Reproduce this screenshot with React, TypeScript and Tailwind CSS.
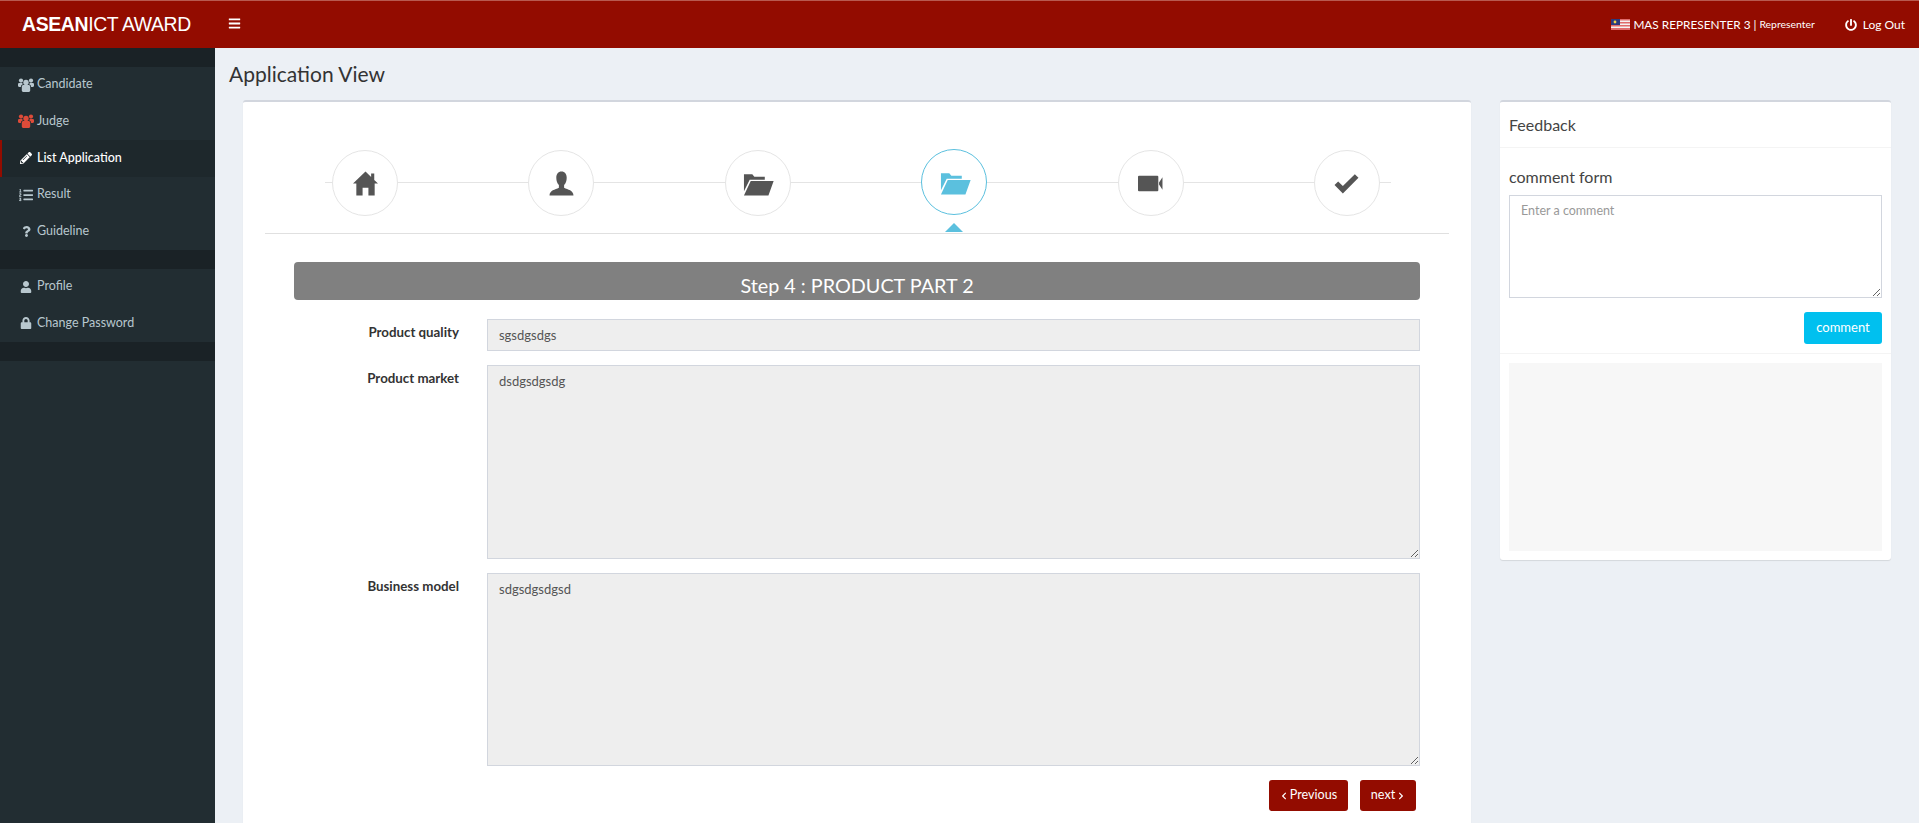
import { FaPencilAlt, FaListOl, FaQuestion, FaUser, FaLock, FaBars, FaPowerOff, FaChevronLeft, FaChevronRight } from "react-icons/fa";
import type { ReactNode } from "react";

function MalaysiaFlag() {
  return (
    <svg width="19" height="11" viewBox="0 0 19 11" className="shrink-0">
      <rect width="19" height="11" fill="#f5f0f0" />
      <rect y="0" width="19" height="1.5" fill="#e06a6a" />
      <rect y="3" width="19" height="1.5" fill="#e06a6a" />
      <rect y="6" width="19" height="1.5" fill="#e06a6a" />
      <rect y="9" width="19" height="2" fill="#e06a6a" />
      <rect width="9" height="6" fill="#2b3a7e" />
      <circle cx="4" cy="3" r="1.4" fill="#f2d64b" />
    </svg>
  );
}

// three-person group, the package's FaUsers is too flat for this one
function GroupIcon() {
  return (
    <svg width="16" height="14" viewBox="0 0 16 14" fill="currentColor">
      <circle cx="8" cy="4.400" r="2.700" />
      <path d="M3.800 8.600c0-1 .8-1.600 1.800-1.600h4.800c1 0 1.800.6 1.800 1.600v3.900c0 .8-.6 1.400-1.400 1.400H5.200c-.8 0-1.400-.6-1.400-1.400z" />
      <circle cx="3" cy="2.600" r="2.100" />
      <circle cx="13" cy="2.600" r="2.100" />
      <path d="M0 6.300C0 5.500.6 5 1.400 5h3c-.2.5.1 1 .5 1.300C3.500 6.700 2.900 7.600 2.900 9H1.200C.5 9 0 8.500 0 7.800zM16 6.300C16 5.500 15.400 5 14.600 5h-3c.2.5-.1 1-.5 1.300 1.400.4 2 1.300 2 2.700h1.700c.7 0 1.200-.5 1.200-1.200z" />
    </svg>
  );
}

function SideItem({ icon, label, active, iconClass }: { icon: ReactNode; label: string; active?: boolean; iconClass?: string }) {
  return (
    <div className={`flex h-[36.6px] items-center border-l-[2px] pb-[1px] pl-[16px] ${active ? "border-[#930c00] bg-[#1e282c] text-white" : "border-transparent text-[#b8c7ce]"}`}>
      <span className={`flex w-[16px] justify-center text-[14px] ${iconClass ?? ""}`}>{icon}</span>
      <span className={`ml-[3px] text-[12.500px] ${active ? "font-medium" : ""}`}>{label}</span>
    </div>
  );
}

const folderOpen = "M-1 3h8l2 2.500h10v3H4.500L-1 19.500zM5.500 9.700H27.500L22.500 23.500H-1z";

const stepIcons: ReactNode[] = [
  // home
  <path key="h" d="M12 .5 0 12h3.200v11.500h6V16h5.600v7.500h6V12H24l-3.600-3.400V2.500h-3v3.300z" />,
  // user
  <path key="u" d="M12 .5C8.800.5 7 3.100 7 6.500c0 3 1 5.400 2.500 7V16C6 17.700.5 18.500.5 23.500h23C23.500 18.500 18 17.700 14.500 16v-2.500c1.500-1.600 2.500-4 2.500-7C17 3.100 15.200.5 12 .5z" />,
  <path key="f" d={folderOpen} />,
  <path key="f2" d={folderOpen} />,
  // video
  <path key="v" d="M1 4.500h17.500a1 1 0 0 1 1 1v13a1 1 0 0 1-1 1H1a1 1 0 0 1-1-1v-13a1 1 0 0 1 1-1zM20.200 11 23.500 6v12l-3.300-5z" />,
  // check
  <path key="c" d="M8.500 21.500.5 13.500 4 10l4.500 4.500L20 3l3.500 3.500z" />,
];

function StepCircle({ index, active }: { index: number; active?: boolean }) {
  return (
    <div className={`relative z-10 flex h-[66px] w-[66px] items-center justify-center rounded-full border bg-white ${active ? "-translate-y-px border-[#5bc0de]" : "border-[#e5e5e5]"}`}>
      <svg viewBox="0 0 24 24" className={`h-[25px] w-[25px] overflow-visible ${active ? "fill-[#5bc0de]" : "fill-[#555555]"}`}>
        {stepIcons[index]}
      </svg>
      {active && <span className="absolute -bottom-[18px] left-1/2 h-0 w-0 -translate-x-1/2 border-x-[9px] border-b-[9px] border-x-transparent border-b-[#5bc0de]" />}
    </div>
  );
}

function Field({ label, children }: { label: string; children: ReactNode }) {
  return (
    <div className="flex">
      <label className="w-[165px] pt-[3px] text-right text-[13.300px] font-bold leading-[20px] text-[#333333]">{label}</label>
      <div className="ml-[28px] flex-1">{children}</div>
    </div>
  );
}

function ReadOnlyArea({ value }: { value: string }) {
  return (
    <textarea
      readOnly
      value={value}
      className="block h-[193.500px] w-full resize-y border border-[#d2d6de] bg-[#eeeeee] px-[11px] py-[5px] text-[13px] leading-[20px] text-[#555555]"
    />
  );
}

export default function App() {
  return (
    <div className="flex h-screen flex-col overflow-hidden bg-[#ecf0f5] font-['Lato','Liberation_Sans',sans-serif] text-[#333333]">
      <header className="flex h-[48px] shrink-0 items-center border-t border-[#b85a50] bg-[#930c00] text-white">
        <div className="w-[215px] pl-[22px] font-['Liberation_Sans',Arial,sans-serif] text-[19.400px] tracking-[-0.35px]">
          <b>ASEAN</b>ICT AWARD
        </div>
        <button className="ml-[13px] mb-[2px] text-[13px]"><FaBars /></button>
        <div className="ml-auto flex items-center pr-[14px]">
          <MalaysiaFlag />
          <span className="ml-[3px] text-[11.800px]">MAS REPRESENTER 3 |</span>
          <span className="ml-[3px] mt-[1px] text-[10.400px]">Representer</span>
          <FaPowerOff className="ml-[30px] text-[12px]" />
          <span className="ml-[6px] text-[12px]">Log Out</span>
        </div>
      </header>

      <div className="flex min-h-0 flex-1">
        <aside className="w-[215px] shrink-0 bg-[#222d32]">
          <div className="h-[19px] bg-[#1a2226]" />
          <SideItem icon={<GroupIcon />} label="Candidate" />
          <SideItem icon={<GroupIcon />} label="Judge" iconClass="text-[#dd4b39]" />
          <SideItem icon={<FaPencilAlt className="text-[12px]" />} label="List Application" active />
          <SideItem icon={<FaListOl />} label="Result" />
          <SideItem icon={<FaQuestion className="text-[11px]" />} label="Guideline" />
          <div className="h-[19px] bg-[#1a2226]" />
          <SideItem icon={<FaUser className="text-[12px]" />} label="Profile" />
          <SideItem icon={<FaLock className="text-[12px]" />} label="Change Password" />
          <div className="h-[19px] bg-[#1a2226]" />
        </aside>

        <main className="min-w-0 flex-1 pl-[14px] pr-[28px]">
          <h1 className="pt-[11px] text-[21px] font-normal leading-[30px] text-[#333333]">Application View</h1>
          <div className="mt-[11px] flex items-start">
            <section className="ml-[14px] w-[1228px] shrink-0 rounded-[3px] border-t-[2px] border-[#d2d6de] bg-white px-[22px] pt-[48px] pb-[60px] shadow-[0_1px_1px_rgba(0,0,0,0.1)]">
              <div className="relative ml-[60px] mr-[58px] flex justify-between pl-[7px] pr-[11px]">
                <div className="absolute inset-x-0 top-1/2 h-px -translate-y-px bg-[#e4e4e4]" />
                {stepIcons.map((_, i) => (
                  <StepCircle key={i} index={i} active={i === 3} />
                ))}
              </div>
              <div className="mt-[17px] border-b border-[#e0e0e0]" />

              <div className="mx-[29px] mt-[28px]">
                <div className="h-[38px] rounded-[4px] bg-[#808080] pt-[8px] text-center text-[19.800px] leading-[30px] text-white">
                  Step 4 : PRODUCT PART 2
                </div>
                <div className="mt-[19px] flex flex-col gap-[14px]">
                  <Field label="Product quality">
                    <input
                      readOnly
                      value="sgsdgsdgs"
                      className="block h-[32px] w-full border border-[#d2d6de] bg-[#eeeeee] px-[11px] text-[13px] text-[#555555]"
                    />
                  </Field>
                  <Field label="Product market">
                    <ReadOnlyArea value="dsdgsdgsdg" />
                  </Field>
                  <Field label="Business model">
                    <ReadOnlyArea value="sdgsdgsdgsd" />
                  </Field>
                </div>
                <div className="mt-[14px] flex justify-end gap-[12px] pr-[4px]">
                  <button className="flex h-[31px] w-[79px] items-center justify-center gap-[2px] rounded-[3px] bg-[#930c00] text-[12.600px] text-white">
                    <FaChevronLeft className="text-[8px]" /> Previous
                  </button>
                  <button className="flex h-[31px] w-[56px] items-center justify-center gap-[2px] rounded-[3px] bg-[#930c00] text-[12.600px] text-white">
                    next <FaChevronRight className="text-[8px]" />
                  </button>
                </div>
              </div>
            </section>

            <aside className="ml-[29px] w-[391px] shrink-0 rounded-[3px] border-t-[2px] border-[#d2d6de] bg-white shadow-[0_1px_1px_rgba(0,0,0,0.1)]">
              <div className="flex h-[46px] items-center border-b border-[#f4f4f4] px-[9px] text-[16px] text-[#444444]">Feedback</div>
              <div className="border-b border-[#f4f4f4] px-[9px] pb-[9px] pt-[17px]">
                <h3 className="text-[16px] font-normal leading-[24px] text-[#444444]">comment form</h3>
                <textarea
                  placeholder="Enter a comment"
                  className="mt-[6px] block h-[103px] w-full resize-y border border-[#d2d6de] bg-white px-[11px] py-[5px] text-[12.500px] leading-[20px] placeholder:text-[#999999]"
                />
                <div className="mt-[14px] flex justify-end">
                  <button className="h-[32px] w-[78px] rounded-[3px] bg-[#00c0ef] text-[13px] text-white">comment</button>
                </div>
              </div>
              <div className="p-[9px]">
                <div className="h-[188px] bg-[#f7f7f7]" />
              </div>
            </aside>
          </div>
        </main>
      </div>
    </div>
  );
}
